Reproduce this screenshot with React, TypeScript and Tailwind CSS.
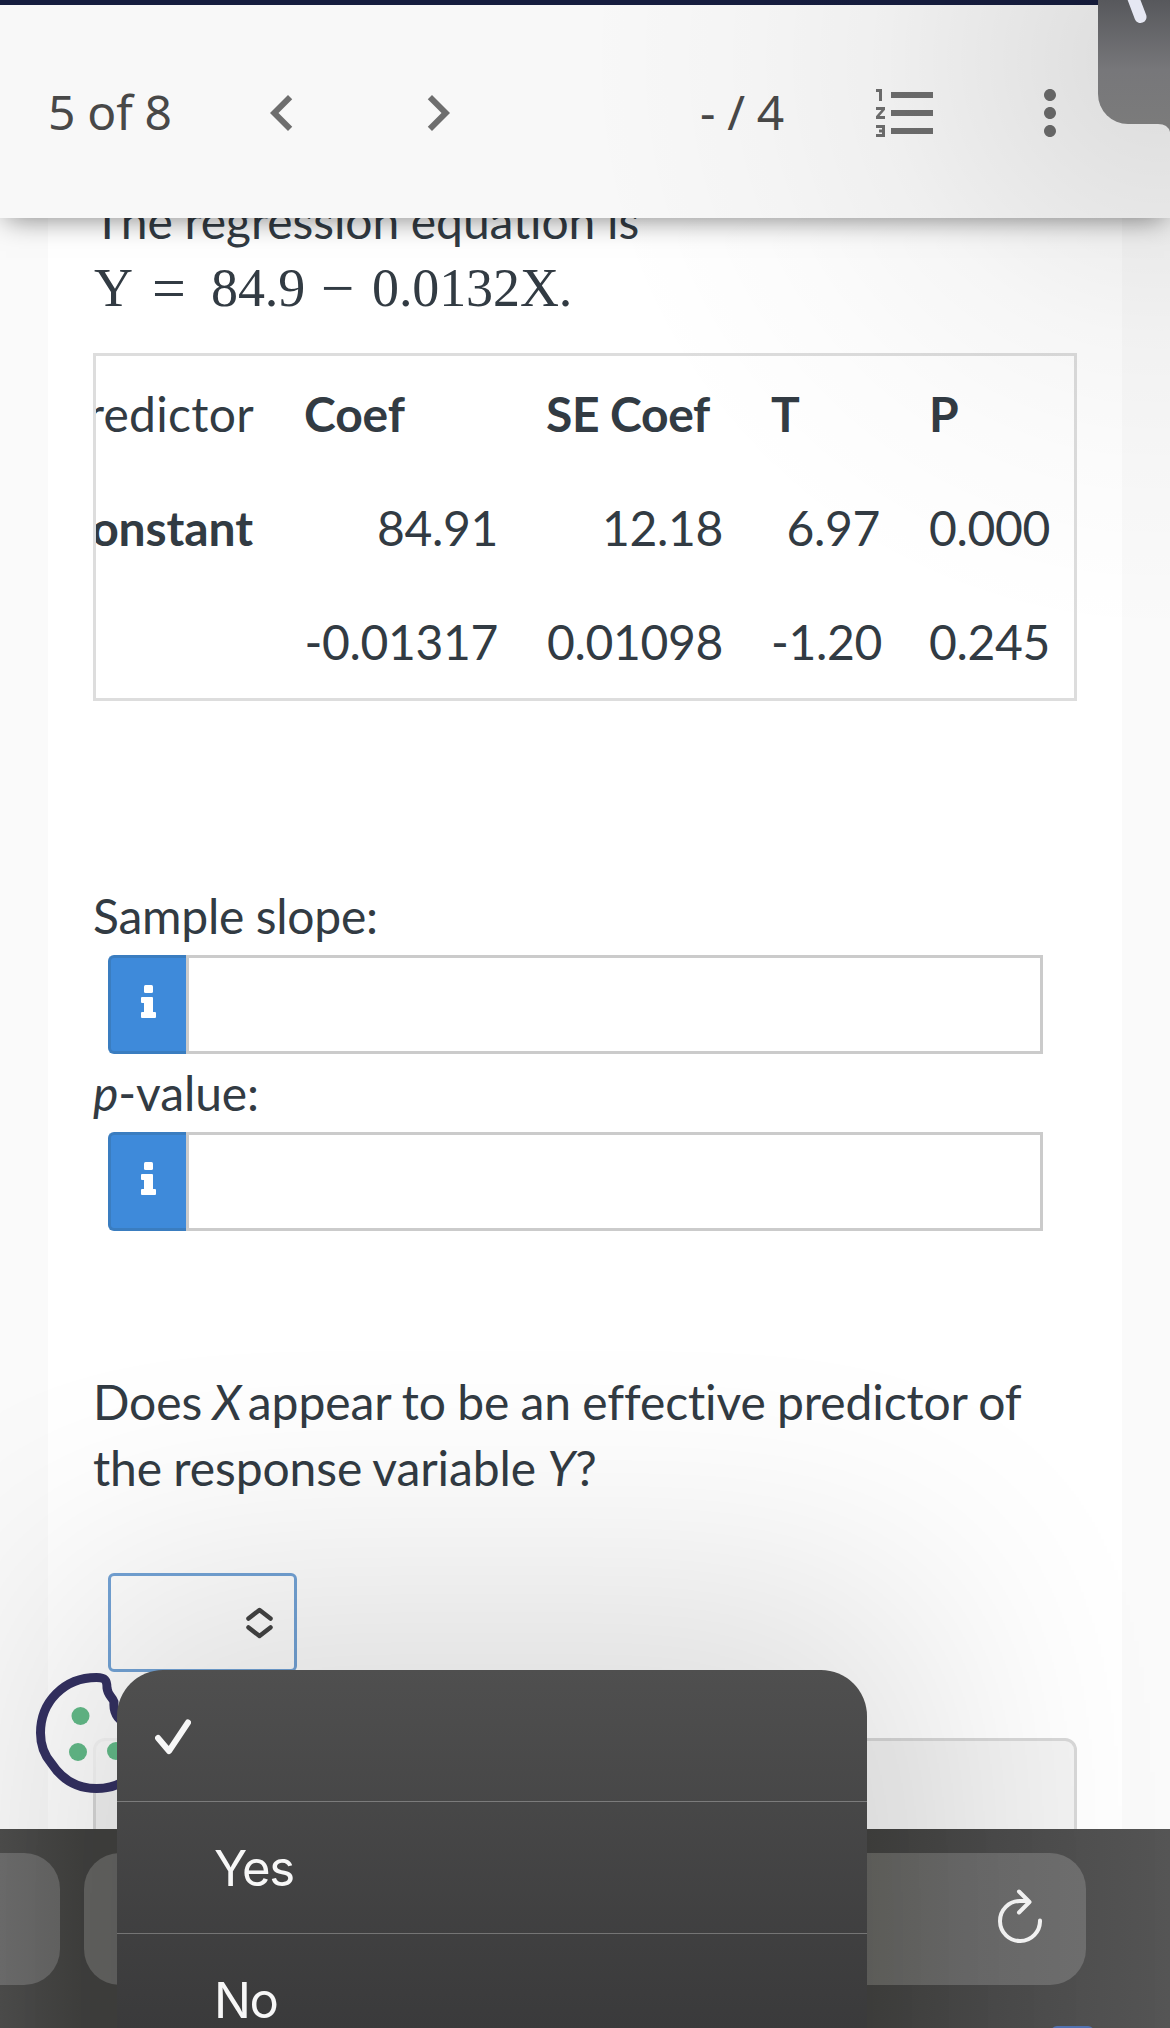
import React from "react";

const HeaderButton = ({ d, className }: { d: string; className?: string }) => (
  <svg viewBox="0 0 24 24" className={`size-[72px] shrink-0 fill-[#6e6e6e] ${className ?? ""}`}>
    <path d={d} />
  </svg>
);

const Header = () => {
  return (
    <header className="relative z-10 flex h-[218px] shrink-0 items-center border-t-[5px] border-[#161d3f] bg-[#f8f8f8] pt-[3px] pl-12 font-['Noto_Sans'] text-[48px] text-[#484848] shadow-[0_6px_27px_-6px_rgba(0,0,0,0.52)]">
      <span className="-mt-[2px] w-[198px] whitespace-nowrap">5 of 8</span>
      <HeaderButton d="M15.41 7.41L14 6l-6 6 6 6 1.41-1.41L10.83 12z" />
      <HeaderButton d="M10 6L8.59 7.41 13.17 12l-4.58 4.59L10 18l6-6z" className="ml-[84px]" />
      <span className="-mt-[2px] ml-[226px] w-[170px] whitespace-nowrap">- / 4</span>
      <HeaderButton d="M2 17h2v.5H3v1h1v.5H2v1h3v-4H2v1zm1-9h1V4H2v1h1v3zm-1 3h1.8L2 13.1v.9h3v-1H3.200L5 10.900V10H2v1zm5-6v2h14V5H7zm0 14h14v-2H7v2zm0-6h14v-2H7v2z" />
      <HeaderButton
        d="M12 8c1.1 0 2-.9 2-2s-.9-2-2-2-2 .9-2 2 .9 2 2 2zm0 2c-1.1 0-2 .9-2 2s.9 2 2 2 2-.9 2-2-.9-2-2-2zm0 6c-1.1 0-2 .9-2 2s.9 2 2 2 2-.9 2-2-.9-2-2-2z"
        className="ml-[72px]"
      />
    </header>
  );
};

const CoefTable = () => {
  return (
    <div className="mt-[34px] grid w-[984px] shrink-0 grid-cols-[160px_194px_177px_110px_121px] gap-x-12 overflow-hidden border-[3px] border-[#dddddd] tracking-[-0.35px] *:pt-[25px] *:pb-[23px] *:whitespace-nowrap">
      <div className="flex justify-end pr-[2px] tracking-[0.3px]">Predictor</div>
      <div className="font-bold tracking-[-0.1px]">Coef</div>
      <div className="font-bold">SE Coef</div>
      <div className="font-bold">T</div>
      <div className="font-bold">P</div>

      <div className="flex justify-end pr-[3px] font-bold tracking-[-0.1px]">Constant</div>
      <div className="text-right">84.91</div>
      <div className="text-right">12.18</div>
      <div className="pr-px text-right">6.97</div>
      <div className="text-right">0.000</div>

      <div></div>
      <div className="text-right">-0.01317</div>
      <div className="text-right">0.01098</div>
      <div className="pr-px text-right">-1.20</div>
      <div className="text-right">0.245</div>
    </div>
  );
};

const AnswerInput = () => {
  return (
    <div className="mt-[6px] ml-[15px] flex h-[99px] w-[935px] shrink-0">
      <div className="flex w-[78px] items-center justify-center rounded-l-[6px] border-y-[3px] border-l-[3px] border-[#3a7dc0] bg-[#3e8ada] pb-[6px]">
        <svg viewBox="0 0 15 33" className="h-[33px] w-[15px] fill-white">
          <rect x="3" y="0" width="9" height="8" rx="1.5" />
          <path d="M1 12h10q1 0 1 1v14h2q1 0 1 1v4q0 1-1 1H1q-1 0-1-1v-4q0-1 1-1h2V18H1q-1 0-1-1v-4q0-1 1-1z" />
        </svg>
      </div>
      <div className="flex-1 border-[3px] border-[#cbcbcb]"></div>
    </div>
  );
};

const CookieBadge = () => {
  return (
    <svg viewBox="0 0 120 122" className="absolute top-[1672px] left-9 h-[122px] w-[120px]">
      <path
        d="M60.500 5.500C28 5.500 4.500 30 4.500 61C4.500 74 9 84 15.500 91.500C25 106 40 116.500 60.500 116.500C91 116.500 115 92 115.500 62C104 62 97 60 94 50C84 52 77 42 78 30C76 24 72 24 71 16C71 8 69 5.500 60.500 5.500Z"
        className="fill-white/80 stroke-[#343162]"
        strokeWidth="9"
        strokeLinejoin="round"
      />
      <circle cx="44.500" cy="44" r="9" className="fill-[#64bc8a]" />
      <circle cx="42" cy="80" r="9" className="fill-[#64bc8a]" />
      <circle cx="80" cy="79" r="9" className="fill-[#64bc8a]" />
    </svg>
  );
};

const OptionMenu = () => {
  return (
    <div className="absolute top-[1670px] left-[117px] h-[480px] w-[750px] rounded-t-[46px] bg-[linear-gradient(#4f4f4f,#3a3a3b_358px)] font-[Inter] text-[49px] tracking-[-1.4px] text-[#f7f7f7]">
      <div className="flex h-[132px] items-center border-b border-[#7b7b7b] pt-[2px] pl-[38px]">
        <svg viewBox="0 0 36 36" className="size-9 fill-none stroke-[#f7f7f7]">
          <path d="M3 19L14 32L33 3.500" strokeWidth="6" strokeLinecap="round" strokeLinejoin="round" />
        </svg>
      </div>
      <div className="flex h-[132px] items-center border-b border-[#757575] pt-[2px] pl-[97px]">Yes</div>
      <div className="flex h-[132px] items-center pt-[2px] pl-[97px]">No</div>
    </div>
  );
};

const BottomBar = () => {
  return (
    <div className="h-[199px] shrink-0 overflow-hidden bg-[linear-gradient(90deg,#4e4e4d,#424240_7%,#424240_74%,#4b4b4b_85%,#555555)] pt-6">
      <div className="flex h-[132px] gap-6">
        <div className="w-[60px] rounded-r-[36px] bg-[linear-gradient(90deg,#6e6e6e,#676766)]"></div>
        <div className="flex w-[1002px] items-center justify-end rounded-[36px] bg-[linear-gradient(90deg,#656563,#656561_78%,#6b6b6b_88%,#6f6f6f)] pr-[44px] pb-[6px]">
          <svg viewBox="0 0 44 54" className="h-[54px] w-11 fill-none stroke-[#f8f8f8]">
            <path
              d="M42 31.500A20 20 0 1 1 22 12H30M21 2.500L31.500 13L21 23.500"
              strokeWidth="4"
              strokeLinecap="round"
              strokeLinejoin="round"
            />
          </svg>
        </div>
      </div>
      <div className="mt-[41px] ml-[1051px] h-3 w-[43px] rounded-t-[6px] bg-[#5273b3]"></div>
    </div>
  );
};

export default function App() {
  return (
    <div className="relative flex h-[2028px] w-[1170px] flex-col overflow-hidden bg-[#fafafa] font-[Lato] text-[48px] leading-[66px] tracking-[-0.1px] text-[#323b43] [word-spacing:-0.5px]">
      <Header />

      <main className="ml-[48px] flex w-[1074px] flex-1 flex-col overflow-hidden bg-white pl-[45px]">
        <p className="-mt-[30px] shrink-0 whitespace-nowrap">The regression equation is</p>
        <p className="flex h-[65px] shrink-0 pl-px font-['Liberation_Serif'] text-[54px] leading-[68px]">
          <span className="w-[58px]">Y</span>
          <span className="w-[59px] text-[60px]">=</span>
          <span className="w-[110px]">84.9</span>
          <span className="w-[51px] text-[59px]">−</span>
          <span>0.0132X.</span>
        </p>
        <CoefTable />

        <p className="mt-[182px] shrink-0 tracking-[-0.25px]">Sample slope:</p>
        <AnswerInput />
        <p className="mt-[6px] shrink-0">
          <i>p</i>-value:
        </p>
        <AnswerInput />

        <p className="mt-[138px] shrink-0 whitespace-nowrap [word-spacing:-0.9px]">
          Does <i className="-ml-px">X</i>
          <span className="ml-[-5px]"> appear to be an effective predictor of</span>
          <br />
          the response variable <i>Y</i>?
        </p>
        <div className="mt-[72px] ml-[15px] flex h-[99px] w-[189px] shrink-0 items-center justify-end rounded-[6px] border-[3px] border-[#74a4d7] pr-[21px]">
          <svg viewBox="0 0 27 32" className="h-8 w-[27px] fill-none stroke-[#444444]">
            <path d="M2.500 11.500L13.500 3L24.500 11.500M2.500 20.500L13.500 29L24.500 20.500" strokeWidth="4.500" strokeLinecap="round" strokeLinejoin="round" />
          </svg>
        </div>
        <div className="mt-[66px] h-[140px] w-[984px] shrink-0 rounded-t-[12px] border-[3px] border-[#d8d8d8] bg-[#f3f3f3]"></div>
      </main>

      <BottomBar />
      <CookieBadge />

      {/* soft shadows under the floating panels */}
      <div className="absolute inset-0 z-20 bg-[radial-gradient(circle_at_1160px_60px,rgba(0,0,0,0.1)_50px,rgba(0,0,0,0.065)_170px,rgba(0,0,0,0.035)_280px,rgba(0,0,0,0.014)_410px,transparent_580px)]"></div>
      <div className="absolute inset-0 z-20 overflow-hidden opacity-[0.135]">
        <div className="absolute top-[1580px] left-[58px] h-[900px] w-[868px] bg-black blur-[130px]"></div>
      </div>

      {/* floating picture-in-picture corner */}
      <div className="absolute top-0 right-0 z-20 h-[124px] w-[72px] rounded-bl-[30px] bg-[linear-gradient(#57585c,#77777a_70px,#7b7b7b)]">
        <svg viewBox="0 0 72 136" className="h-[136px] w-[72px]">
          <path d="M60 123.500H72V132Q70 124 60 124Z" className="fill-[#7b7b7b]" />
          <path d="M33 -8L42.500 17" className="stroke-[#e6e8f3]" strokeWidth="12" strokeLinecap="round" />
        </svg>
      </div>
      <div className="absolute inset-0 z-30 overflow-hidden">
        <OptionMenu />
      </div>
    </div>
  );
}
